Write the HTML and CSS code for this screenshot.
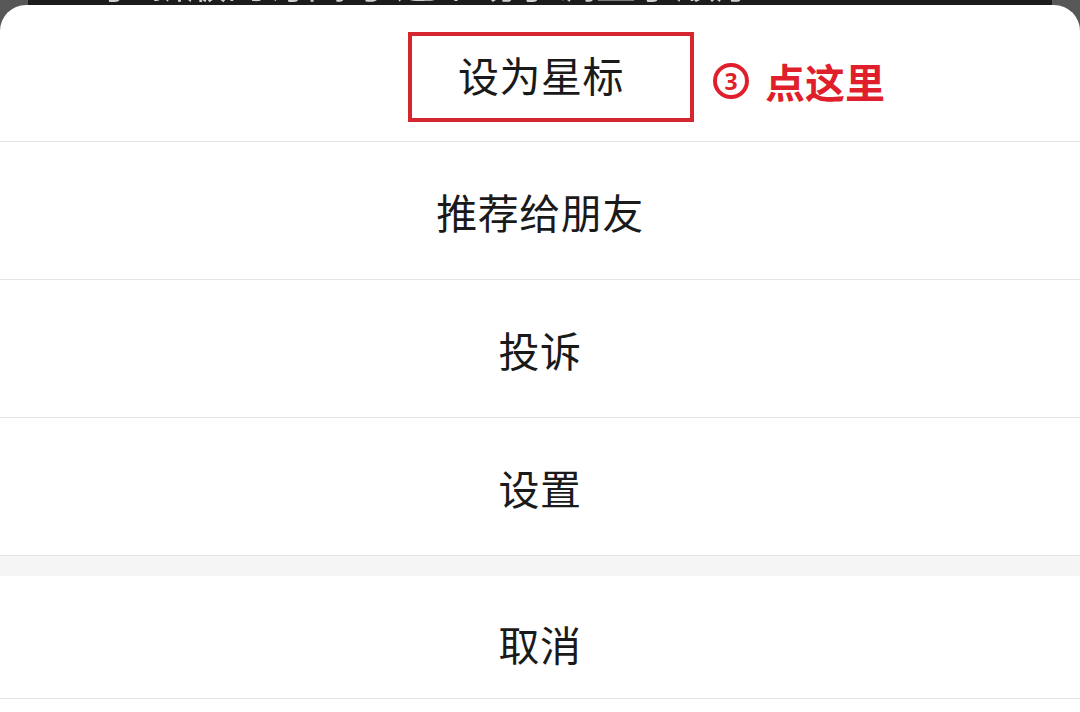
FILE: index.html
```html
<!DOCTYPE html>
<html lang="zh-CN">
<head>
  <meta charset="UTF-8">
  <meta name="viewport" content="width=device-width, initial-scale=1.0">
  <title>设为星标</title>
  <link rel="stylesheet" href="styles.css">
</head>
<body>

  <!-- article behind the sheet, only its last line peeks out -->
  <div class="backdrop">
    <div class="backdrop-band">
      <p class="backdrop-text">了 新版的订阅号 这个助手调整了顺序</p>
    </div>
  </div>

  <!-- Action sheet -->
  <div class="sheet">
    <div class="sheet-item sheet-item-first">
      <div class="highlight-box">
        <span>设为星标</span>
        <div class="callout">
          <span class="callout-num">3</span>
          <span class="callout-text">点这里</span>
        </div>
      </div>
    </div>
    <div class="sheet-item">推荐给朋友</div>
    <div class="sheet-item">投诉</div>
    <div class="sheet-item">设置</div>
    <div class="sheet-gap"></div>
    <div class="sheet-item sheet-item-cancel">取消</div>
  </div>

</body>
</html>
```

FILE: styles.css
```css
/* styles.css */
body {
  margin: 0;
  padding: 0;
  background-color: #fff;
  font-family: "Noto Sans CJK SC", "Noto Sans", sans-serif;
  overflow: hidden;
}

.backdrop {
  height: 32px;
  padding: 0 28px;
  background-color: #575757;
}

.backdrop-band {
  height: 100%;
  background-color: #1c1c1c;
  overflow: hidden;
}

.backdrop-text {
  margin: -43px 0 0 70px;
  color: #cfcfcf;
  font-size: 40px;
  line-height: 48px;
  white-space: nowrap;
  filter: blur(0.7px);
}

.sheet {
  position: relative;
  margin-top: -27px;
  background-color: #fff;
  border-radius: 26px 26px 0 0;
}

.sheet-item {
  height: 137px;
  border-bottom: 1px solid #e5e5e5;
  display: flex;
  align-items: center;
  justify-content: center;
  color: #1a1a1a;
  font-size: 41px;
  letter-spacing: 0.5px;
}

.sheet-item-first {
  height: 136px;
}

.sheet-item-cancel {
  box-sizing: border-box;
  height: 123px;
  padding-top: 12px;
}

.sheet-gap {
  height: 20px;
  background-color: #f5f5f5;
}

.highlight-box {
  position: relative;
  box-sizing: border-box;
  width: 286px;
  height: 90px;
  margin: 8px 0 0 22px;
  padding: 0 0 6px 46px;
  border: 4px solid #d6262f;
  display: flex;
  align-items: center;
}

.callout {
  position: absolute;
  left: calc(100% + 23px);
  top: 16px;
  display: flex;
  align-items: center;
  gap: 16px;
  color: #df1f2b;
  white-space: nowrap;
}

.callout-num {
  box-sizing: border-box;
  width: 36px;
  height: 36px;
  border: 4px solid #df1f2b;
  border-radius: 50%;
  display: flex;
  align-items: center;
  justify-content: center;
  font-family: "Noto Sans", sans-serif;
  font-size: 23px;
  font-weight: 700;
  letter-spacing: 0;
}

.callout-text {
  font-size: 40px;
  font-weight: 700;
  letter-spacing: 0;
}
```
